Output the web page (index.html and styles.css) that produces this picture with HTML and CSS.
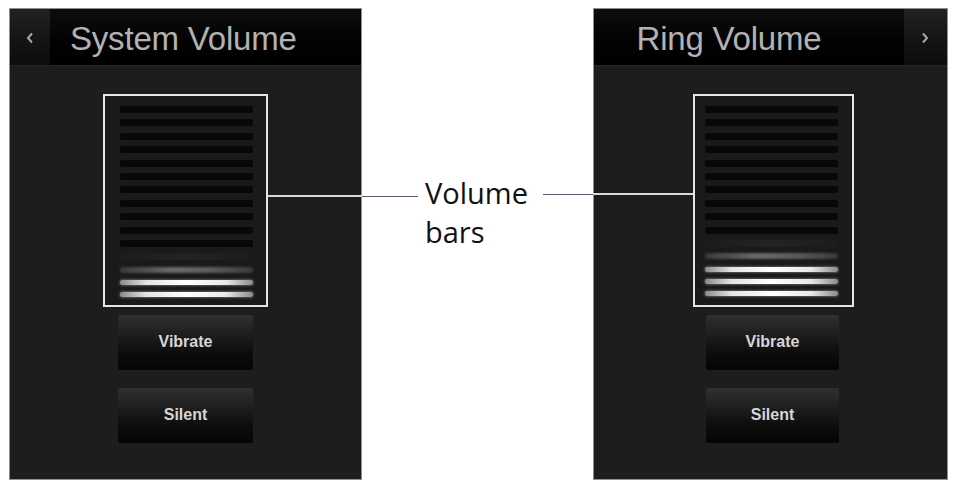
FILE: index.html
```html
<!DOCTYPE html>
<html>
<head>
<meta charset="utf-8">
<link rel="stylesheet" href="styles.css">
</head>
<body>
<div class="page">
  <section class="phone phone-left">
    <header class="head">
      <div class="nav nav-back">
        <svg width="8" height="12" viewBox="0 0 8 12"><polyline points="6,1.5 2,6 6,10.5" fill="none" stroke="#a8a8a8" stroke-width="2"/></svg>
      </div>
      <h1 class="title title-left">System Volume</h1>
    </header>
    <div class="body">
      <div class="vol vol-left">
        <div class="bar off"></div><div class="bar off"></div><div class="bar off"></div>
        <div class="bar off"></div><div class="bar off"></div><div class="bar off"></div>
        <div class="bar off"></div><div class="bar off"></div><div class="bar off"></div>
        <div class="bar off"></div><div class="bar off"></div><div class="bar faint"></div>
        <div class="bar dim"></div><div class="bar on"></div><div class="bar on"></div>
      </div>
      <div class="btn">Vibrate</div>
      <div class="btn">Silent</div>
    </div>
  </section>

  <div class="callout">
    <p class="label">Volume<br>bars</p>
  </div>

  <section class="phone phone-right">
    <header class="head">
      <h1 class="title title-right">Ring Volume</h1>
      <div class="nav nav-fwd">
        <svg width="8" height="12" viewBox="0 0 8 12"><polyline points="2,1.5 6,6 2,10.5" fill="none" stroke="#a8a8a8" stroke-width="2"/></svg>
      </div>
    </header>
    <div class="body">
      <div class="vol vol-right">
        <div class="bar off"></div><div class="bar off"></div><div class="bar off"></div>
        <div class="bar off"></div><div class="bar off"></div><div class="bar off"></div>
        <div class="bar off"></div><div class="bar off"></div><div class="bar off"></div>
        <div class="bar off"></div><div class="bar faint"></div><div class="bar dim"></div>
        <div class="bar on"></div><div class="bar on"></div><div class="bar on"></div>
      </div>
      <div class="btn btn-right">Vibrate</div>
      <div class="btn btn-right">Silent</div>
    </div>
  </section>

  <div class="line white-line line-l1"></div>
  <div class="line blue-line line-l2"></div>
  <div class="line blue-line line-r1"></div>
  <div class="line white-line line-r2"></div>
</div>
</body>
</html>
```

FILE: styles.css
```css
html, body {
  margin: 0;
  padding: 0;
  background: #ffffff;
}

.page {
  position: relative;
  display: flex;
  align-items: flex-start;
  padding: 8px 0 0 9px;
  width: 953px;
  height: 484px;
  box-sizing: border-box;
}

.phone {
  height: 472px;
  box-sizing: border-box;
  border: 1px solid #8f8f8f;
  background: #1d1d1d;
  display: flex;
  flex-direction: column;
}

.phone-left { width: 353px; }
.phone-right { width: 355px; }

.head {
  height: 57px;
  flex: none;
  display: flex;
  background: linear-gradient(#0d0d0d, #020202 60%, #000);
  border-bottom: 1px solid #262626;
  box-sizing: border-box;
}

.nav {
  flex: none;
  display: flex;
  align-items: center;
  justify-content: center;
  background: linear-gradient(#222, #141414 55%, #0c0c0c);
}

.nav-back {
  width: 40px;
  padding-top: 2px;
  box-sizing: border-box;
}

.nav-fwd {
  width: 43px;
  margin-left: auto;
  padding-top: 2px;
  box-sizing: border-box;
}

.title {
  margin: 0;
  font-family: "Liberation Sans", Arial, sans-serif;
  font-weight: normal;
  font-size: 33px;
  line-height: 57px;
  padding-top: 1px;
  color: #b2b2b2;
  letter-spacing: -0.2px;
  white-space: nowrap;
}

.title-left { padding-left: 20px; }
.title-right { margin-left: auto; padding-right: 40px; }

.body {
  flex: 1;
  display: flex;
  flex-direction: column;
  align-items: center;
  padding-top: 28px;
}

.vol {
  width: 165px;
  height: 213px;
  box-sizing: border-box;
  border: 2px solid #e6e6e6;
  background: #1a1a1a;
  padding: 10px 13px 0 15px;
  display: flex;
  flex-direction: column;
  gap: 6.4px;
}

.vol-right {
  width: 161px;
  padding: 10px 14px 0 10px;
  margin-left: 6px;
}

.bar {
  height: 7px;
  flex: none;
  border-radius: 2px;
}

.bar.off {
  background: #080808;
}

.bar.faint {
  background: linear-gradient(90deg, #1c1c1c, #232323 50%, #1c1c1c);
}

.bar.dim {
  background: linear-gradient(90deg, #3a3a3a, #6a6a6a 40%, #5a5a5a 70%, #3a3a3a);
  height: 6px;
  filter: blur(0.8px);
}

.bar.on {
  height: 5px;
  margin-top: 1px;
  background: linear-gradient(90deg, #8a8a8a, #e4e4e4 20%, #ffffff 50%, #e8e8e8 80%, #8a8a8a);
  box-shadow: 0 0 3px rgba(255,255,255,0.55);
}

.btn {
  width: 135px;
  height: 55px;
  margin-top: 8px;
  box-sizing: border-box;
  background: linear-gradient(#303030, #1e1e1e 35%, #0c0c0c 70%, #050505);
  border-radius: 2px;
  display: flex;
  align-items: center;
  justify-content: center;
  padding-bottom: 2px;
  font-family: "Liberation Sans", Arial, sans-serif;
  font-weight: bold;
  font-size: 16px;
  color: #d6d6d6;
}

.btn + .btn {
  margin-top: 18px;
}

.btn-right {
  width: 133px;
  margin-left: 4px;
}

.callout {
  width: 231px;
  height: 472px;
  flex: none;
}

.label {
  margin: 165px 0 0 63px;
  font-family: "Open Sans", "Noto Sans", sans-serif;
  font-size: 29px;
  line-height: 39px;
  color: #111;
}

.line {
  position: absolute;
  height: 2px;
}

.white-line { background: #d8d8d8; }
.blue-line { background: #4f5f7c; height: 1.5px; }

.line-l1 { left: 268px; width: 94px; top: 195px; }
.line-l2 { left: 362px; width: 56px; top: 195.5px; }
.line-r1 { left: 543px; width: 50px; top: 193.5px; }
.line-r2 { left: 593px; width: 100px; top: 193px; }
```
